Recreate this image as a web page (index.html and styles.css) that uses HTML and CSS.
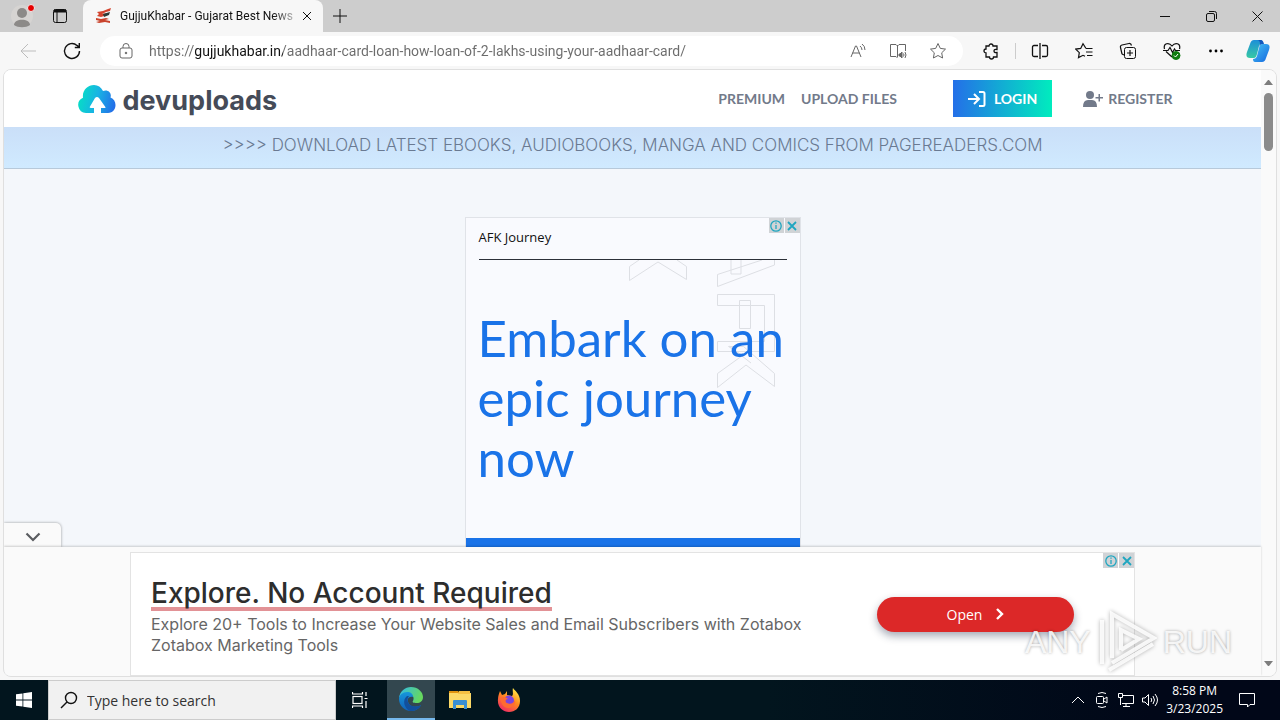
FILE: index.html
```html
<!DOCTYPE html>
<html lang="en">
<head>
  <meta charset="UTF-8">
  <meta name="viewport" content="width=device-width, initial-scale=1.0">
  <title>GujjuKhabar - Gujarat Best News</title>
  <link rel="stylesheet" href="styles.css">
</head>
<body>
  <!-- tabs -->
  <header class="titlebar">
    <button class="profile" aria-label="Profile">
      <svg width="28" height="28" viewBox="0 0 28 28"><circle cx="13" cy="14" r="11" fill="#d6d4d2"/><circle cx="13" cy="11" r="5" fill="#8c8a88"/><path d="M5 23c0-7 16-7 16 0-4 3-12 3-16 0z" fill="#8c8a88"/><circle cx="22" cy="6" r="3.5" fill="#e60000" stroke="#eee"/></svg>
    </button>
    <button class="tab-actions" aria-label="Tab actions">
      <svg class="line" width="16" height="16" viewBox="0 0 16 16"><rect x="1.5" y="1.5" width="13" height="13" rx="2"/><path d="M2 3h12" stroke-width="3"/><path d="M5 4v10"/></svg>
    </button>
    <div class="tab">
      <svg width="16" height="16" viewBox="0 0 16 16"><path d="M2 4l6-1 5-2 3-1-1 3-4 1-4 2 6-1-1 2-6 2-4-1 2-2z" fill="#d4452f"/><path d="M8 6l7-2-1 3-5 2z" fill="#2c3b37"/><path d="M1 10l5 1 5-1 3 1-4 1 5 1v2l-5-1-6 1-3-1 4-1-4-1z" fill="#c9432c"/></svg>
      <span class="tab-title">GujjuKhabar - Gujarat Best News</span>
      <button class="tab-close" aria-label="Close tab">
        <svg class="line" width="10" height="10" viewBox="0 0 10 10"><path d="M1 1l8 8M9 1l-8 8"/></svg>
      </button>
    </div>
    <button class="new-tab" aria-label="New tab">
      <svg class="line" width="14" height="14" viewBox="0 0 14 14"><path d="M7 0v14M0 7h14"/></svg>
    </button>
    <div class="window-buttons">
      <button aria-label="Minimize"><svg class="line" width="10" height="10" viewBox="0 0 10 10"><path d="M0 5.500h10"/></svg></button>
      <button aria-label="Restore"><svg class="line" width="11" height="11" viewBox="0 0 11 11"><rect x=".5" y="2.500" width="8" height="8" rx="1.500"/><path d="M3 .5h5.500a2 2 0 0 1 2 2V8"/></svg></button>
      <button aria-label="Close"><svg class="line" width="11" height="11" viewBox="0 0 11 11"><path d="M.5.5l10 10M10.500.5l-10 10"/></svg></button>
    </div>
  </header>

  <!-- toolbar -->
  <div class="toolbar">
    <button class="tool dim" aria-label="Back"><svg class="line" width="20" height="20" viewBox="0 0 20 20"><path d="M18 10H3M10 3l-7 7 7 7"/></svg></button>
    <button class="tool" aria-label="Refresh"><svg class="line" width="20" height="20" viewBox="0 0 20 20"><path d="M17.500 10a7.500 7.500 0 1 1-2.500-5.600L17 6M17.300 2v4.500h-4.500" stroke-width="1.400"/></svg></button>
    <div class="address">
      <svg class="line gray" width="14" height="18" viewBox="0 0 14 18"><rect x="1" y="6" width="12" height="10" rx="2"/><path d="M4 6V4.500a3 3 0 0 1 6 0V6"/><circle cx="7" cy="11" r=".8" fill="#666"/></svg>
      <input class="url" type="text" aria-label="Address" value="https://gujjukhabar.in/aadhaar-card-loan-how-loan-of-2-lakhs-using-your-aadhaar-card/">
      <button class="addr-btn" aria-label="Read aloud"><svg class="line gray" width="18" height="18" viewBox="0 0 18 18"><path d="M2 15L6.500 4h1L12 15M3.500 11h7M11 4q2 1.500 2 4M13 2q3 2 3 6"/></svg></button>
      <button class="addr-btn" aria-label="Immersive reader"><svg class="line gray" width="18" height="18" viewBox="0 0 18 18"><path d="M8.500 3v12M8.500 4L7 2.500H1.500v12H7l1.500 1.500M8.500 4L10 2.500h6.500V9"/><path d="M10 12h1l2-2v6l-2-2h-1z" fill="#666"/><path d="M14.500 11.500q1 1.500 0 3M16 10q2 3 0 6"/></svg></button>
      <button class="addr-btn" aria-label="Favorite"><svg class="line gray" width="18" height="18" viewBox="0 0 18 18"><path d="M9 1.500l2.300 4.900 5.200.7-3.800 3.700.9 5.200L9 13.500 4.400 16l.9-5.200L1.500 7.100l5.200-.7z"/></svg></button>
    </div>
    <div class="tools">
      <button class="tool" aria-label="Extensions"><svg class="line" width="18" height="18" viewBox="0 0 18 18"><path d="M4 4h3a2 2 0 0 1 4 0h4v3.500q-3-.5-3 1.500t3 1.500V15h-3.500a2 2 0 0 1-4 0H4v-4a2 2 0 0 1 0-4z" stroke-width="1.300"/></svg></button>
      <span class="divider"></span>
      <button class="tool" aria-label="Split screen"><svg class="line" width="18" height="18" viewBox="0 0 18 18"><path d="M9 1v16M7 3.500H3a1.500 1.500 0 0 0-1.500 1.500v8A1.500 1.500 0 0 0 3 14.500h4M11 3.500h4A1.500 1.500 0 0 1 16.500 5v8a1.500 1.500 0 0 1-1.500 1.500h-4" stroke-width="1.300"/></svg></button>
      <button class="tool" aria-label="Favorites"><svg class="line" width="18" height="18" viewBox="0 0 18 18"><path d="M11 6.500L8 1.800 5.700 6.400l-4.900.7 3.500 3.500-.8 5L8 13.300l2 1M11 6.500h6.500M11 10h6.500M12 13.500h5.500" stroke-width="1.200"/></svg></button>
      <button class="tool" aria-label="Collections"><svg class="line" width="18" height="18" viewBox="0 0 18 18"><rect x="5.500" y="5.500" width="11" height="11" rx="2"/><path d="M11 8v6M8 11h6M3 12L1.500 5.500q-.5-2 1.500-2.500l7-1.500q2-.3 2.500 2M3 12l2 1" stroke-width="1.200"/></svg></button>
      <button class="tool" aria-label="Browser essentials"><svg class="line" width="18" height="18" viewBox="0 0 18 18"><path d="M9 15L3 9.500M1.500 7C0 1 6 0 9 4c3-4 9-3 7.500 3M0 8.500h5l2-3 2.500 5 2-3.500 1 1.500H17" stroke-width="1.200"/><circle cx="13" cy="13.500" r="4" fill="#107c10" stroke="#107c10"/><path d="M11 13.500l1.500 1.500 2.500-3" stroke="#fff"/></svg></button>
      <button class="tool" aria-label="Settings and more"><svg width="18" height="18" viewBox="0 0 18 18"><circle cx="3.500" cy="9" r="1.400"/><circle cx="9" cy="9" r="1.400"/><circle cx="14.500" cy="9" r="1.400"/></svg></button>
      <button class="tool copilot" aria-label="Copilot">
        <svg width="24" height="24" viewBox="0 0 24 24">
          <defs>
            <linearGradient id="cpA" x1="0" y1="0" x2="0" y2="1"><stop offset="0" stop-color="#1d8fd8"/><stop offset="1" stop-color="#37c9a4"/></linearGradient>
            <linearGradient id="cpB" x1="0" y1="0" x2="1" y2="1"><stop offset="0" stop-color="#46c4f3"/><stop offset="1" stop-color="#1467e0"/></linearGradient>
          </defs>
          <path d="M15 1H8Q5 1 4 5L1 13q-2 6 3 6h4q2 0 3-4l2-8q1-3 4-3-1-3-2-3z" fill="url(#cpA)"/>
          <path d="M9 23h7q3 0 4-4l3-8q2-6-3-6h-4q-2 0-3 4l-2 8q-1 3-4 3 0 3 2 3z" fill="url(#cpB)"/>
          <path d="M15 1q2 0 3 4h-2q-2 0-3 4l1-4q0-4-3-4z" fill="#1358bd"/>
        </svg>
      </button>
    </div>
  </div>

  <!-- web page -->
  <div class="viewport">
    <main class="page">
      <nav class="site-nav">
        <a class="logo" href="#">
          <svg width="38" height="28" viewBox="0 0 38 28">
            <defs><linearGradient id="cloud" x1="0" y1=".4" x2="1" y2=".6"><stop offset="0" stop-color="#06dfc4"/><stop offset=".5" stop-color="#18b3e4"/><stop offset="1" stop-color="#246fe8"/></linearGradient></defs>
            <path d="M8 28a8 8 0 0 1-3-15.300C4 5 10 0 16 0q6 0 9 6c5-2 9 2 7.500 6.500C40 15 39 28 30 28h-7v-5h4q1 0 0-1.500l-6-8.500q-2-2-4 0l-5 8.500q-1 1.500 1 1.500h3v5z" fill="url(#cloud)"/>
          </svg>
          <span>devuploads</span>
        </a>
        <div class="nav-links">
          <a href="#">PREMIUM</a>
          <a href="#">UPLOAD FILES</a>
          <a class="login" href="#">
            <svg width="18" height="16" viewBox="0 0 18 16" fill="none" stroke="#fff" stroke-width="2"><path d="M0 8h10M6 3l5 5-5 5M11 1h4a1.500 1.500 0 0 1 1.500 1.500v11A1.500 1.500 0 0 1 15 15h-4"/></svg>
            LOGIN
          </a>
          <a class="register" href="#">
            <svg width="20" height="16" viewBox="0 0 20 16" fill="#727a8a"><circle cx="7" cy="4" r="4"/><path d="M0 16q0-7 5-7h4q5 0 5 7zM16 3h1v3h3v1.500h-3v3h-1.500v-3h-3V6h3V3z"/></svg>
            REGISTER
          </a>
        </div>
      </nav>
      <a class="notice" href="#">&gt;&gt;&gt;&gt; DOWNLOAD LATEST EBOOKS, AUDIOBOOKS, MANGA AND COMICS FROM PAGEREADERS.COM</a>

      <section class="ad">
        <div class="ad-choices">
          <button aria-label="Ad info"><svg width="12" height="12" viewBox="0 0 12 12" fill="none" stroke="#1fa6c0" stroke-width="1.300"><circle cx="6" cy="6" r="5.200"/><path d="M6 5v4M6 2.500v1.300"/></svg></button>
          <button aria-label="Close ad"><svg width="12" height="12" viewBox="0 0 12 12" fill="none" stroke="#1fa6c0" stroke-width="1.800"><path d="M2 2l8 8M10 2l-8 8"/></svg></button>
        </div>
        <div class="ad-name">AFK Journey</div>
        <svg class="ad-art" width="146" height="128" viewBox="0 0 146 128" fill="none" stroke="#dddfe4"><path d="M10 0L.5 6.500v14L29 2l28.500 17.500v-13L48 0M88.500 26.500v-12L133 0M88.500 26.500L145.500 5V0M102 0v14h10V0M88.500 34.500h57v57h-57v-10h47v-36h-47zM110.500 40.500h11v28h-11zM88.500 127.500v-14l25-18-14-9h15l31 27v13L117 105zM100 86l22 17"/></svg>
        <h1>Embark on an epic journey now</h1>
        <div class="ad-footer"></div>
      </section>
    </main>

    <div class="scrollbar">
      <svg width="9" height="5" viewBox="0 0 9 5" fill="#7d7d7d"><path d="M0 5h9L5 0H4z"/></svg>
      <div class="thumb"></div>
      <svg width="9" height="5" viewBox="0 0 9 5" fill="#7d7d7d"><path d="M0 0h9L5 5H4z"/></svg>
    </div>

    <!-- anchor ad over the bottom of the page -->
    <aside class="anchor">
      <button class="collapse" aria-label="Hide ad"><svg width="16" height="10" viewBox="0 0 16 10" fill="none" stroke="#5a5c60" stroke-width="2.200"><path d="M1.500 1.500L8 8l6.500-6.500"/></svg></button>
      <div class="anchor-body">
        <div class="banner">
          <div class="ad-choices">
            <button aria-label="Ad info"><svg width="12" height="12" viewBox="0 0 12 12" fill="none" stroke="#1fa6c0" stroke-width="1.300"><circle cx="6" cy="6" r="5.200"/><path d="M6 5v4M6 2.500v1.300"/></svg></button>
            <button aria-label="Close ad"><svg width="12" height="12" viewBox="0 0 12 12" fill="none" stroke="#1fa6c0" stroke-width="1.800"><path d="M2 2l8 8M10 2l-8 8"/></svg></button>
          </div>
          <div class="banner-text">
            <h2><a href="#">Explore. No Account Required</a></h2>
            <p>Explore 20+ Tools to Increase Your Website Sales and Email Subscribers with Zotabox Zotabox Marketing Tools</p>
          </div>
          <button class="open">Open <svg width="8" height="12" viewBox="0 0 8 12" fill="none" stroke="#fff" stroke-width="2.400"><path d="M1 1l5 5-5 5"/></svg></button>
        </div>
      </div>
    </aside>
  </div>

  <div class="watermark">
    <span>ANY</span>
    <svg width="60" height="64" viewBox="0 0 60 64" fill="none" stroke="#fff" stroke-opacity=".85" stroke-width="4"><path d="M5 10v44M15 48V4l42 24-42 25M24 40V20l18 9-18 11M12 60l44-26"/></svg>
    <span>RUN</span>
  </div>

  <!-- taskbar -->
  <footer class="taskbar">
    <button class="task" aria-label="Start"><svg width="16" height="16" viewBox="0 0 16 16" fill="#fff"><path d="M0 2.300L6.500 1.400v6.200H0zM7.300 1.300L16 0v7.600H7.300zM0 8.400h6.500v6.200L0 13.700zM7.300 8.400H16V16l-8.700-1.300z"/></svg></button>
    <label class="search">
      <svg class="line" width="18" height="18" viewBox="0 0 18 18"><circle cx="11" cy="7" r="5.500" stroke-width="1.400"/><path d="M7 11l-6 6" stroke-width="1.400"/></svg>
      <input type="text" placeholder="Type here to search" aria-label="Search">
    </label>
    <button class="task" aria-label="Task view"><svg width="16" height="16" viewBox="0 0 16 16" fill="none" stroke="#fff" stroke-width="1.200"><rect x="1" y="4.500" width="9" height="7"/><path d="M.5 0v2h10V0M.5 16v-2h10v2M14 0v4M14 9v7M12.500 6.500h3"/></svg></button>
    <div class="apps">
      <button class="task active" aria-label="Edge">
        <svg width="24" height="24" viewBox="0 0 24 24">
          <defs>
            <linearGradient id="edgeA" x1="0" y1="0" x2="1" y2=".3"><stop offset="0" stop-color="#2fb9ec"/><stop offset="1" stop-color="#66d85f"/></linearGradient>
            <linearGradient id="edgeB" x1="0" y1="0" x2="0" y2="1"><stop offset="0" stop-color="#1696db"/><stop offset="1" stop-color="#1261b8"/></linearGradient>
          </defs>
          <path d="M0 11C1 4 6 0 12 0c7 0 12 5 12 10 0 4-3 6-6 6-4 0-5-1-4-2 2-4-1-7-5-7-4 0-8 2-9 4z" fill="url(#edgeA)"/>
          <path d="M0 12c0-4 4-7 8-7 4 0 6 2 6 5-6-1-6 4-4 7 3 4 9 3 12 1-2 4-6 6-10 6C5 24 0 18 0 12z" fill="url(#edgeB)"/>
          <path d="M8 9c-5 4-3 12 3 15 5 0 9-2 11-6-5 3-10 1-12-1-2-3-2-6 0-8z" fill="#124f9c"/>
        </svg>
      </button>
      <button class="task" aria-label="File Explorer"><svg width="22" height="20" viewBox="0 0 22 20"><path d="M0 1h9l2 3H0z" fill="#e0930f"/><path d="M0 3h22v15H0z" fill="#fbd867"/><path d="M10 1h11v3H9z" fill="#f5c043"/><path d="M4 19v-8q0-1 1-1h12q1 0 1 1v8h-3v-4H7v4z" fill="#3a8fd4"/></svg></button>
      <button class="task" aria-label="Firefox">
        <svg width="24" height="24" viewBox="0 0 24 24">
          <defs><linearGradient id="fox" x1=".8" y1="0" x2=".2" y2="1"><stop offset="0" stop-color="#fff04a"/><stop offset=".45" stop-color="#ff8a1f"/><stop offset="1" stop-color="#f0256a"/></linearGradient></defs>
          <path d="M3 3l2 4 3-1 2-3v4l5 1c2-2 0-5 1-8 2 3 7 6 7 13S18 24 12 24 0 19 1 11c0-3 1-5 2-8z" fill="url(#fox)"/>
          <circle cx="12" cy="12.500" r="5" fill="#7b44df"/><path d="M3 10c4-2 6-1 8 1-3 0-3 3-1 4 3 2 7 0 8-3 1 5-3 8-7 8s-7-4-8-10z" fill="#ff6b32"/>
        </svg>
      </button>
    </div>
    <div class="tray">
      <svg class="tray-icon" width="16" height="12" viewBox="-2 0 16 12"><path d="M0 9l6-6 6 6"/></svg>
      <svg class="tray-icon" width="16" height="16" viewBox="-2 0 16 16"><rect x=".5" y="4.500" width="7" height="7" rx="1"/><path d="M8 7l3-2v6L8 9M2 1.500q4-2 8 0M2 14.500q4 2 8 0"/></svg>
      <svg class="tray-icon" width="16" height="14" viewBox="0 0 16 14"><path d="M5 2.500h10.500v8H4M8 10.500v3M5 13.500h7M.5.5h4v4h-4zM2.500 5v7"/></svg>
      <svg class="tray-icon" width="16" height="14" viewBox="0 0 16 14"><path d="M.5 5v4H3l3.500 3.500v-11L3 5zM9 5q1.500 2 0 4M11 3q3 4 0 8M13 1q5 6 0 12"/></svg>
      <div class="clock"><span>8:58 PM</span><span>3/23/2025</span></div>
      <button class="notify" aria-label="Notifications"><svg class="tray-icon" width="16" height="16" viewBox="0 0 16 16"><path d="M.5 1.500h15v11H11L8.500 15V12.500h-8z"/></svg></button>
    </div>
  </footer>
</body>
</html>
```
FILE: styles.css
```css
* {
  box-sizing: border-box;
}
body {
  margin: 0;
  height: 100vh;
  display: flex;
  flex-direction: column;
  overflow: hidden;
  position: relative;
  background: #f7f7f7;
  font-family: "Open Sans", "Noto Sans", sans-serif;
  font-size: 12px;
  color: #111;
}
button {
  border: 0;
  padding: 0;
  background: none;
  font: inherit;
  color: inherit;
  display: flex;
  align-items: center;
  justify-content: center;
}
a {
  color: inherit;
  text-decoration: none;
}
svg {
  flex: none;
}
.line {
  fill: none;
  stroke: #111;
}
.line.gray {
  stroke: #666;
}

/* tabs */
.titlebar {
  display: flex;
  height: 32px;
  background: #cdcdcd;
}
.profile {
  width: 46px;
}
.tab-actions {
  width: 28px;
}
.tab {
  display: flex;
  align-items: center;
  width: 240px;
  margin-left: 9px;
  padding: 0 10px 0 12px;
  background: #f7f7f7;
  border-radius: 8px 8px 0 0;
}
.tab-title {
  flex: 1;
  margin-left: 9px;
  font-family: Roboto, "Open Sans", sans-serif;
  white-space: nowrap;
  -webkit-mask-image: linear-gradient(to right, #000 88%, rgba(0, 0, 0, 0.3));
}
.tab-close {
  width: 12px;
  margin-left: 8px;
}
.new-tab {
  width: 34px;
}
.window-buttons {
  display: flex;
  margin-left: auto;
}
.window-buttons button {
  width: 46px;
}

/* toolbar */
.toolbar {
  display: flex;
  align-items: center;
  height: 37px;
  padding: 0 2px 0 6px;
}
.tool {
  width: 44px;
  height: 30px;
}
.tool.dim {
  opacity: 0.25;
}
.address {
  flex: 1;
  display: flex;
  align-items: center;
  height: 30px;
  margin: 0 6px;
  padding: 0 5px 0 19px;
  background: #fff;
  border-radius: 15px;
}
.url {
  flex: 1;
  min-width: 0;
  margin-left: 16px;
  padding: 0;
  border: 0;
  outline: 0;
  font: 14px Roboto, "Open Sans", sans-serif;
  color: transparent;
  background: linear-gradient(to right, #6b6b6b 46px, #111 46px, #111 134px, #6b6b6b 134px);
  -webkit-background-clip: text;
  background-clip: text;
}
.addr-btn {
  width: 40px;
}
.tools {
  display: flex;
  align-items: center;
}
.divider {
  width: 1px;
  height: 16px;
  margin: 0 2px;
  background: #ccc;
}
.copilot {
  width: 40px;
}

/* page */
.viewport {
  flex: 1;
  min-height: 0;
  display: flex;
  position: relative;
  margin: 0 3px 3px;
  border: 1px solid #dfdfdf;
  border-radius: 8px;
  overflow: hidden;
  background: #fafafa;
}
.page {
  flex: 1;
  overflow: hidden;
  background: #f4f7fb;
}
.site-nav {
  display: flex;
  align-items: center;
  justify-content: space-between;
  max-width: 1140px;
  height: 57px;
  margin: 0 auto;
  padding: 0 15px;
  background: #fff;
  box-shadow: -100px 0 #fff, 100px 0 #fff;
}
.logo {
  display: flex;
  align-items: center;
  gap: 7px;
  font: 700 27px Inter, "Open Sans", sans-serif;
  color: #454b58;
}
.logo span {
  padding-top: 3px;
}
.nav-links {
  display: flex;
  align-items: center;
  gap: 16px;
  padding-right: 15px;
  font: 700 14px Lato, "Open Sans", sans-serif;
  color: #727a8a;
}
.login {
  display: flex;
  align-items: center;
  gap: 8px;
  height: 37px;
  margin: 0 15px 0 40px;
  padding: 0 15px;
  color: #fff;
  background: linear-gradient(to right, #246fe8, #00ecbe);
}
.register {
  display: flex;
  align-items: center;
  gap: 5px;
}
.notice {
  display: block;
  height: 42px;
  line-height: 37px;
  text-align: center;
  font-family: Inter, "Open Sans", sans-serif;
  font-size: 17px;
  font-weight: 300;
  color: #6a7a92;
  background: linear-gradient(#cadff8, #d0eaff);
  border-bottom: 1px solid #b7c9da;
}
.ad {
  position: relative;
  width: 336px;
  margin: 48px auto 0;
  border: 1px solid #e0e3e8;
  background: #f9fafe;
}
.ad-choices {
  position: absolute;
  top: 0;
  right: 0;
  display: flex;
  gap: 1px;
}
.ad-choices button {
  width: 15px;
  height: 15px;
  background: #d0d3d6;
}
.ad-name {
  margin: 0 13px;
  height: 42px;
  line-height: 39px;
  font-size: 13px;
  border-bottom: 1px solid #2c3038;
}
.ad-art {
  position: absolute;
  top: 42px;
  right: 25px;
}
.ad h1 {
  position: relative;
  margin: 48px 12px 50px;
  font: 400 51px/60px Lato, "Open Sans", sans-serif;
  color: #1a73e8;
}
.ad-footer {
  height: 60px;
  background: #1a73e8;
}
.scrollbar {
  display: flex;
  flex-direction: column;
  align-items: center;
  width: 15px;
  padding: 10px 0;
  background: #fafafa;
}
.thumb {
  width: 9px;
  height: 58px;
  margin: 8px 0 auto;
  border-radius: 5px;
  background: #8b8b8b;
}

/* anchor ad */
.anchor {
  position: absolute;
  left: 0;
  right: 15px;
  bottom: 0;
}
.collapse {
  width: 57px;
  height: 24px;
  padding-top: 4px;
  background: #fafafa;
  border-radius: 0 5px 0 0;
  box-shadow: 0 0 3px rgba(0, 0, 0, 0.4);
}
.anchor-body {
  position: relative;
  padding-top: 5px;
  background: #fafafa;
  box-shadow: 0 -1px 2px rgba(0, 0, 0, 0.18);
}
.banner {
  position: relative;
  display: flex;
  justify-content: space-between;
  align-items: center;
  max-width: 1005px;
  height: 124px;
  margin: 0 auto;
  padding: 0 60px 0 20px;
  background: #fff;
  border: 1px solid #e3e3e3;
}
.banner-text {
  width: 660px;
}
.banner h2 {
  margin: 0;
  padding-top: 6px;
  font: 500 28px/28px Inter, "Open Sans", sans-serif;
  color: #2d2d2d;
}
.banner h2 a {
  display: inline-block;
  border-bottom: 4px solid #e29296;
}
.banner p {
  margin: 3px 0 0;
  font: 16px/21px Inter, "Open Sans", sans-serif;
  color: #666;
}
.open {
  width: 197px;
  height: 35px;
  gap: 14px;
  border-radius: 18px;
  background: #dc2828;
  color: #fff;
  font-size: 14px;
  box-shadow: 0 4px 8px rgba(30, 40, 70, 0.4);
}
.watermark {
  position: absolute;
  right: 48px;
  bottom: 46px;
  display: flex;
  align-items: center;
  gap: 6px;
  font: 32px "Liberation Sans Narrow", "Liberation Sans", sans-serif;
  color: rgba(255, 255, 255, 0.85);
  text-shadow: 0 0 3px rgba(0, 0, 0, 0.35);
}
.watermark svg {
  filter: drop-shadow(0 0 2px rgba(0, 0, 0, 0.35));
}

/* taskbar */
.taskbar {
  display: flex;
  height: 40px;
  background: linear-gradient(to right, #02151e 60%, #010718 90%);
  color: #fff;
}
.task {
  width: 48px;
}
.task.active {
  background: #33474f;
  border-bottom: 2px solid #76b9ed;
}
.search {
  display: flex;
  align-items: center;
  gap: 9px;
  width: 288px;
  padding-left: 11px;
  background: #f1f1f1;
  border: 1px solid #ccc;
}
.search input {
  flex: 1;
  padding: 0;
  border: 0;
  outline: 0;
  background: none;
  font: 14px "Open Sans", "Noto Sans", sans-serif;
}
.search input::placeholder {
  color: #333;
}
.apps {
  display: flex;
  gap: 1px;
  margin-left: 3px;
}
.tray {
  display: flex;
  align-items: center;
  gap: 8px;
  margin-left: auto;
  padding-right: 17px;
}
.tray-icon {
  fill: none;
  stroke: #fff;
}
.clock {
  display: flex;
  flex-direction: column;
  align-items: center;
  line-height: 18px;
}
.notify {
  width: 32px;
  height: 40px;
}
```
